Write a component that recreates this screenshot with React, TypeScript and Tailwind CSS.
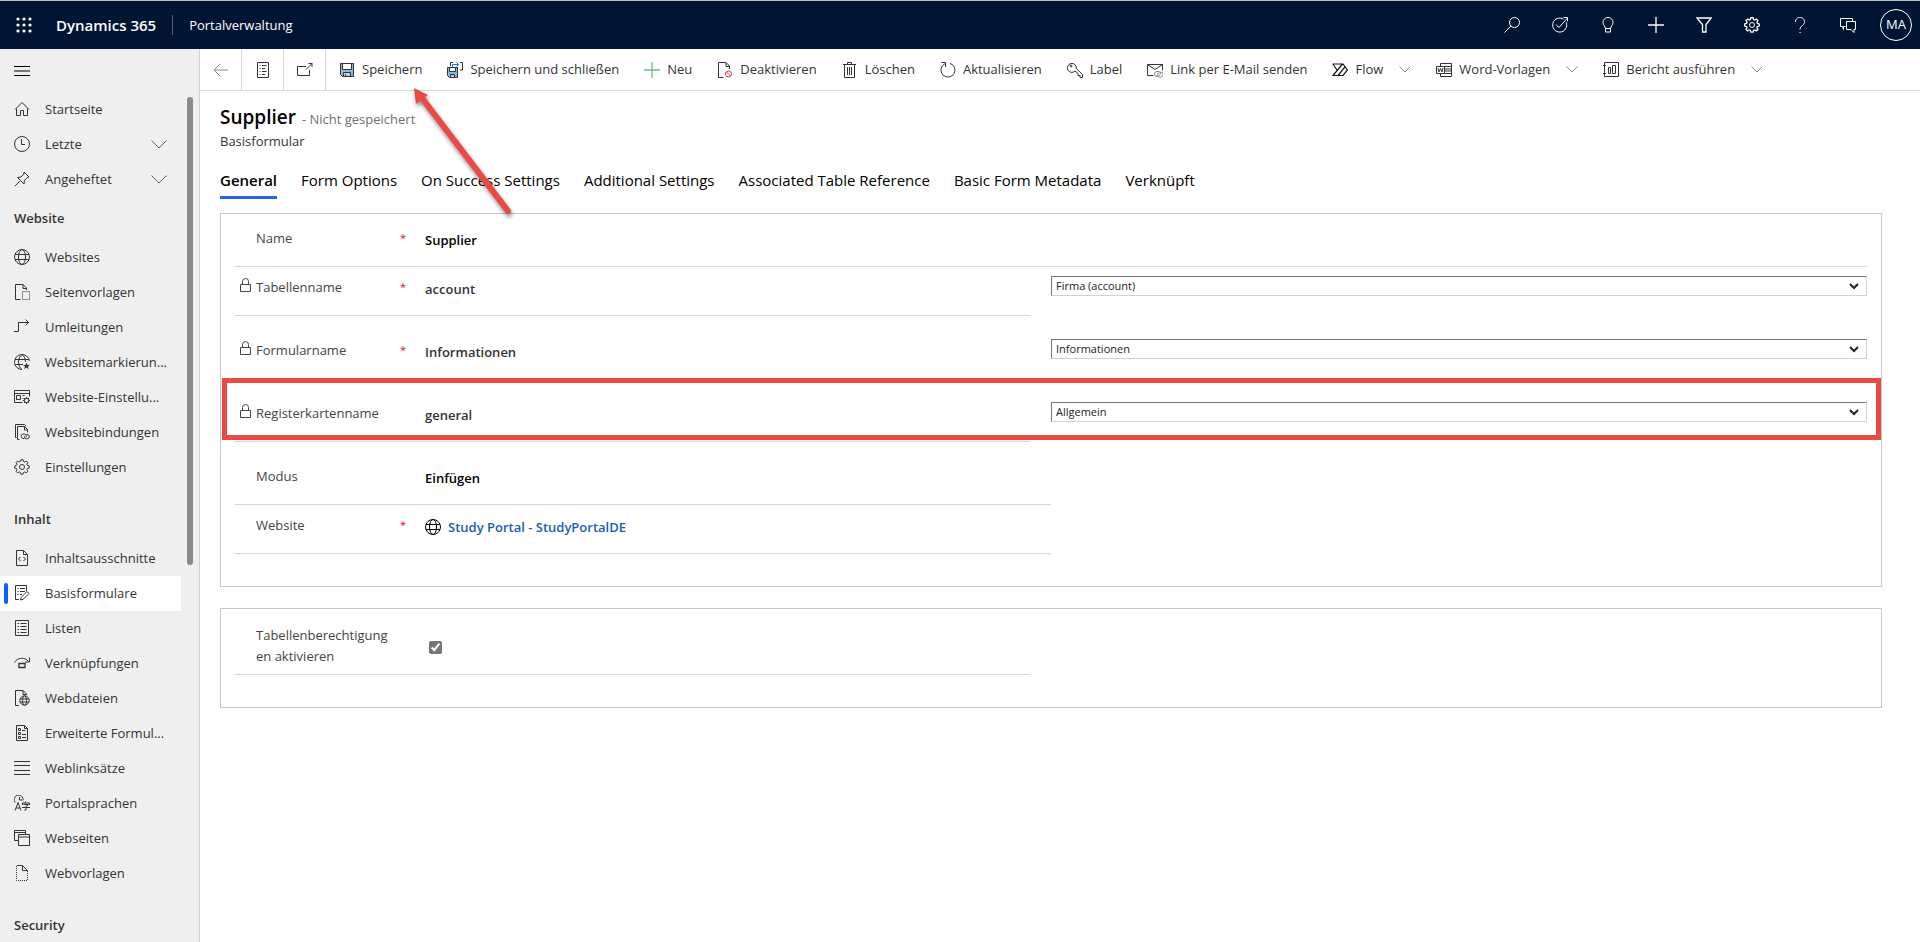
import type { ReactNode } from 'react'

interface IconProps {
  children: ReactNode
  className?: string
}

function Icon({ children, className = '' }: IconProps) {
  return (
    <svg
      width="16"
      height="16"
      viewBox="0 0 16 16"
      fill="none"
      stroke="currentColor"
      aria-hidden="true"
      className={`shrink-0 ${className}`}
    >
      {children}
    </svg>
  )
}

function ChevronIcon({ className = '' }: { className?: string }) {
  return (
    <svg width="16" height="9" viewBox="0 0 16 9" fill="none" stroke="currentColor" aria-hidden="true" className={`shrink-0 ${className}`}>
      <path d="M.5 .5 8 8 15.5 .5" />
    </svg>
  )
}

const GEAR_PATH =
  'M6.9.7h2.2l.4 1.8 1.2.5 1.6-1 1.6 1.6-1 1.6.5 1.2 1.8.5v2.2l-1.8.4-.5 1.2 1 1.6-1.6 1.6-1.6-1-1.2.5-.4 1.8H6.9l-.5-1.8-1.2-.5-1.6 1L2 12.3l1-1.6-.5-1.2-1.8-.4V6.9l1.8-.5.5-1.2-1-1.6L3.6 2l1.6 1 1.2-.5z'

const icons = {
  home: <path d="M1 8.5 8 1.5l7 7M2.5 7.5v7h4v-5h3v5h4v-7" />,
  clock: (
    <>
      <circle cx="8" cy="8" r="7.5" />
      <path d="M7.5 3v5.5H11" />
    </>
  ),
  pin: <path d="m10 1 5 5-1.5.3-3 3-.5 3.700L3.5 6.5l3.500-.5 3-3zM6.500 9.500.8 15.2" />,
  globe: (
    <>
      <circle cx="8" cy="8" r="7.5" />
      <ellipse cx="8" cy="8" rx="3.5" ry="7.5" />
      <path d="M1.2 5.5h13.6M1.2 10.5h13.6" />
    </>
  ),
  pageTemplate: (
    <>
      <path d="M6.5 15.5h-5V.5H9L12.5 4v2M9 .5v4h3.5" />
      <path d="M8.500 7.500v8h7v-8z" strokeDasharray="1 1" />
    </>
  ),
  redirect: <path d="M0 12.5h4.5v-9H15M11.5.5l3 3-3 3" />,
  siteMarker: (
    <>
      <path d="M15.4 7A7.500 7.500 0 1 0 8 15.5M8 .5c-4.600 3-4.600 12 0 15M8 .5c2.500 1.700 3.500 4.500 3.500 7.500M1.2 5.5h13.6M1.2 10.5H9" />
      <path d="m12.5 8.5 1 2.500h2.500l-2 1.600.8 2.600-2.300-1.600-2.300 1.600.8-2.600-2-1.600h2.500z" fill="currentColor" stroke="none" />
    </>
  ),
  siteSetting: (
    <>
      <path d="M8.5 13.5h-8v-12h15v6M.5 4.5h15M2.5 6.500h4v4h-4zM8.500 6.500h2M8.500 9.500h1" />
      <circle cx="12.5" cy="11.5" r="2.2" />
      <path d="M12.5 8v1.500M12.5 13.500V15M9 11.500h1.500M14.500 11.500H16M10 9l1 1M14 13l1 1M15 9l-1 1M11 13l-1 1" />
    </>
  ),
  siteBinding: (
    <>
      <path d="M2.5 13.5h-1V.5h9L12 2M5.5 15.5h-2v-13h7l3 3v3M10.5 2.5v3.500h3" />
      <path d="M10.5 14.5H9a2.300 2.300 0 0 1 0-4.500h1.500a2 2 0 0 1 1.500 3.200M12.500 10.500h.7a2 2 0 0 1 0 4.300H12a2 2 0 0 1-1.200-3" />
    </>
  ),
  gear: (
    <>
      <path d={GEAR_PATH} />
      <circle cx="8" cy="8" r="2.5" />
    </>
  ),
  snippet: (
    <>
      <path d="M2.5.5h7l4 4v11h-11zM9.500.5v4h4" />
      <path d="M6.5 7 4.5 9l2 2M9.5 7l2 2-2 2" />
    </>
  ),
  basicForm: (
    <>
      <path d="M5 14.5H1.500V.5h11V6M3.500 3.500h1M6 3.500h5M3.500 6.500h1M6 6.500h5M3.500 9.500h1M6 9.500h2" />
      <path d="m6.5 15 .7-2.700L13 6.500l2 2-5.800 5.800z" />
    </>
  ),
  list: <path d="M1.5.5h13v15h-13zM3.500 3.500H5M6.500 3.500h6M3.500 6.500H5M6.500 6.500h6M3.500 9.500H5M6.500 9.500h6M3.500 12.500H5M6.500 12.500h6" />,
  shortcut: (
    <>
      <path d="M.5 7.500C3.500 2 11.500 2 14.500 6.500M15.500 2.500v4.500H11" />
      <path d="M5 8.500h6v4H5z" strokeWidth="1.3" />
    </>
  ),
  webFile: (
    <>
      <path d="M5 15.500H1.500V.5H9L12.500 4v1M9 .5v4h3.500" />
      <circle cx="10.5" cy="10.5" r="4.7" />
      <ellipse cx="10.5" cy="10.5" rx="2" ry="4.7" />
      <path d="M6 9h9M6 12h9" />
    </>
  ),
  advancedForm: (
    <>
      <path d="M2.5.5h8l3 3v12h-11zM10.500.5v3h3" />
      <path d="M4.500 3.500h2v2h-2zM4.500 7.500h2v2h-2zM4.500 11.500h2v2h-2zM8 5.500h3.500M8 9.500h4M8 12.500h4" />
    </>
  ),
  linkSet: <path d="M0 1.5h16M0 5.5h16M0 10.5h16M0 14.5h16" />,
  language: (
    <>
      <path d="M1.2 7.500A4.500 4.500 0 1 1 9 5.500M5.500 2v3H8" />
      <path d="m1 15.500 3-8 3 8M2 13h4" />
      <path d="M11.500 6.500V8M8.500 10V8h7v2M9.500 9.500h5L12 11.500V15h-1.500M8 12.500h8" />
    </>
  ),
  webPages: (
    <>
      <path d="M4 10.500H.5v-10h11V4M.5 2.500h11" />
      <path d="M4.500 4.500h11v11h-11zM4.500 7h11" />
    </>
  ),
  webTemplate: (
    <>
      <path d="M2.500 1v14.500h11V6" strokeDasharray="1 1" />
      <path d="M3 .5h5.500l5 5h-5v-5" />
    </>
  ),
}

interface NavEntry {
  label: string
  icon: keyof typeof icons
  active?: boolean
  expandable?: boolean
}

const TOP_ITEMS: NavEntry[] = [
  { label: 'Startseite', icon: 'home' },
  { label: 'Letzte', icon: 'clock', expandable: true },
  { label: 'Angeheftet', icon: 'pin', expandable: true },
]

const WEBSITE_ITEMS: NavEntry[] = [
  { label: 'Websites', icon: 'globe' },
  { label: 'Seitenvorlagen', icon: 'pageTemplate' },
  { label: 'Umleitungen', icon: 'redirect' },
  { label: 'Websitemarkierun...', icon: 'siteMarker' },
  { label: 'Website-Einstellu...', icon: 'siteSetting' },
  { label: 'Websitebindungen', icon: 'siteBinding' },
  { label: 'Einstellungen', icon: 'gear' },
]

const CONTENT_ITEMS: NavEntry[] = [
  { label: 'Inhaltsausschnitte', icon: 'snippet' },
  { label: 'Basisformulare', icon: 'basicForm', active: true },
  { label: 'Listen', icon: 'list' },
  { label: 'Verknüpfungen', icon: 'shortcut' },
  { label: 'Webdateien', icon: 'webFile' },
  { label: 'Erweiterte Formul...', icon: 'advancedForm' },
  { label: 'Weblinksätze', icon: 'linkSet' },
  { label: 'Portalsprachen', icon: 'language' },
  { label: 'Webseiten', icon: 'webPages' },
  { label: 'Webvorlagen', icon: 'webTemplate' },
]

function NavItem({ label, icon, active, expandable }: NavEntry) {
  return (
    <li>
      <a href="#" className={`flex h-[35px] items-center pr-[14px] pl-1 ${active ? 'bg-white' : ''}`}>
        <span className={`h-[21px] w-1 ${active ? 'rounded-xs bg-[#0b62fb]' : ''}`} />
        <span className="ml-1.5 w-[31px] pb-0.5">
          <Icon>{icons[icon]}</Icon>
        </span>
        <span className="flex-1 whitespace-nowrap">{label}</span>
        {expandable && <ChevronIcon className="text-[#666]" />}
      </a>
    </li>
  )
}

function NavGroup({ title, items }: { title: string; items: NavEntry[] }) {
  return (
    <section className="mb-[13px]">
      <h2 className="flex h-[43px] items-center pl-[14px] font-semibold">{title}</h2>
      <ul>
        {items.map((item) => (
          <NavItem key={item.label} {...item} />
        ))}
      </ul>
    </section>
  )
}

function Sidebar() {
  return (
    <aside className="flex w-[200px] shrink-0 flex-col border-r border-[#d2d2d2] bg-[#efefef] text-[13px] text-[#333]">
      <button type="button" aria-label="Navigation umschalten" className="flex h-[43px] shrink-0 items-center pl-[14px] text-black">
        <svg width="16" height="10" viewBox="0 0 16 10" stroke="currentColor" aria-hidden="true">
          <path d="M0 .5h16M0 5h16M0 9.500h16" />
        </svg>
      </button>
      <div className="flex min-h-0 flex-1 gap-1.5 overflow-hidden">
        <nav className="w-[181px]">
          <ul>
            {TOP_ITEMS.map((item) => (
              <NavItem key={item.label} {...item} />
            ))}
          </ul>
          <NavGroup title="Website" items={WEBSITE_ITEMS} />
          <NavGroup title="Inhalt" items={CONTENT_ITEMS} />
          <NavGroup title="Security" items={[]} />
        </nav>
        <div className="mt-[5px] h-[55%] w-1.5 rounded-full bg-[#8a8a8a]" />
      </div>
    </aside>
  )
}

const HEADER_ACTIONS: { label: string; icon: ReactNode }[] = [
  { label: 'Suchen', icon: <><circle cx="10.5" cy="5.5" r="5" /><path d="M7 9 .5 15.500" /></> },
  {
    label: 'Aufgaben',
    icon: <><path d="M11.500 2.200a7 7 0 1 0 2.700 3.300" /><path d="m4 7.500 3 3 8.500-9.500M11.500.5h4v4" /></>,
  },
  {
    label: 'Tipps',
    icon: <path d="M5.500 11.500C5.500 9.500 3 8.500 3 5.400a5 5 0 0 1 10 0c0 3.100-2.500 4.100-2.500 6.100zM5.500 11.500v3.500h5v-3.500" />,
  },
  { label: 'Neu', icon: <path d="M8 0v16M0 8h16" strokeWidth="1.3" /> },
  { label: 'Filter', icon: <path d="M.8 1h14.400L10 7.500V15H6.500V7.500z" strokeWidth="1.3" /> },
  { label: 'Einstellungen', icon: <><path d={GEAR_PATH} strokeWidth="1.3" /><circle cx="8" cy="8" r="2.5" /></> },
  {
    label: 'Hilfe',
    icon: <><path d="M3.500 5a4.500 4.500 0 1 1 7.200 3.400C9 9.600 8 10.200 8 12.500" /><path d="M7.500 15.500h1.200" /></>,
  },
  {
    label: 'Feedback',
    icon: <path d="M5.500 9.500h-2v3l-1-3H.5v-8h12v3M6.500 4.500h9v8h-1.500v3l-3-3H6.500z" />,
  },
]

function TopBar() {
  return (
    <header className="flex h-[49px] shrink-0 items-center border-t border-[#bfbfbf] bg-[#001433] text-white">
      <button type="button" aria-label="App-Startfeld" className="flex h-full w-[47px] items-center justify-center">
        <svg width="16" height="16" viewBox="0 0 16 16" fill="currentColor" aria-hidden="true">
          {[2, 8, 14].map((y) => [2, 8, 14].map((x) => <circle key={`${x}-${y}`} cx={x} cy={y} r="1.6" />))}
        </svg>
      </button>
      <span className="ml-[9px] text-[15px] font-semibold">Dynamics 365</span>
      <span className="ml-4 h-5 w-px bg-[#4b5a72]" />
      <span className="ml-4 pt-0.5 text-[13px]">Portalverwaltung</span>
      <div className="ml-auto flex items-center">
        {HEADER_ACTIONS.map((action) => (
          <button key={action.label} type="button" aria-label={action.label} className="flex h-12 w-12 items-center justify-center">
            <Icon>{action.icon}</Icon>
          </button>
        ))}
        <button type="button" aria-label="Konto" className="mx-2 flex size-8 items-center justify-center rounded-full border border-white text-[13px] font-medium">
          MA
        </button>
      </div>
    </header>
  )
}

const COMMANDS: { label: string; icon: ReactNode; menu?: boolean }[] = [
  {
    label: 'Speichern',
    icon: (
      <>
        <path d="M1.500 1.500h13v13H3.500l-2-2z" fill="#83bbe5" stroke="#333" />
        <path d="M3.500 1.500h9v6h-9z" fill="#fff" stroke="#333" />
        <path d="M4.500 14.500v-4h7v4z" fill="#ccc" stroke="#333" />
        <path d="M6.500 12.500v2" stroke="#333" />
      </>
    ),
  },
  {
    label: 'Speichern und schließen',
    icon: (
      <>
        <path d="M.500 5.500h10v10h-8l-2-2z" fill="#83bbe5" stroke="#333" />
        <path d="M2.500 5.500h6v4h-6z" fill="#fff" stroke="#333" />
        <path d="M3.500 15.500v-3h4v3z" fill="#ccc" stroke="#333" />
        <path d="M3.500 4V.5H6M13 .5h2.500v7.500H13" stroke="#333" />
        <path d="M5.500 4.500v-2h6M9.500.5l2 2-2 2" stroke="#1a73c7" />
      </>
    ),
  },
  { label: 'Neu', icon: <path d="M8 0v16M0 8h16" stroke="#5fbf83" strokeWidth="1.3" /> },
  {
    label: 'Deaktivieren',
    icon: (
      <>
        <path d="M6.500 15.500h-5V.5H9L12.500 4v3M9 .5v4h3.500" />
        <circle cx="11.5" cy="12" r="3" stroke="#dd3b44" />
        <path d="m9.500 10 4 4" stroke="#dd3b44" />
      </>
    ),
  },
  { label: 'Löschen', icon: <path d="M2.500 2.500v13h10v-13M1 2.500h13M5.500 2.500v-2h4v2M5.500 5v8M7.500 5v8M9.500 5v8" /> },
  { label: 'Aktualisieren', icon: <><path d="M4.800 1.800a7 7 0 1 0 5-.5" /><path d="M1.500.5h4V5" /></> },
  {
    label: 'Label',
    icon: (
      <>
        <path d="M8 9.100A4.500 4.500 0 1 1 9.300 6.500L15.500 12.500v3H13v-2h-2v-2z" />
        <circle cx="4" cy="4" r="1" />
      </>
    ),
  },
  {
    label: 'Link per E-Mail senden',
    icon: (
      <>
        <path d="M6.500 13.500h-6v-11h15v6M.5 2.500l7.500 5 7.500-5" />
        <path d="M10 14.500a2.500 2.500 0 0 1 0-5h1.500a2 2 0 0 1 0 4M12.500 10h1a2.500 2.500 0 0 1 0 5H12a2 2 0 0 1 0-4" stroke="#888" />
      </>
    ),
  },
  {
    label: 'Flow',
    icon: <path d="M.8 2H11l4.500 6-4.500 5.500H1L10.500 2M.8 2 5 8M6 13.500 13 4.800" strokeWidth="1.2" stroke="#111" />,
    menu: true,
  },
  {
    label: 'Word-Vorlagen',
    icon: (
      <>
        <path d="M4.500 4V1.500h11v13h-11V12M8.500 4.500h7M8.500 7h7M8.500 9h7M8.500 11.500h7" />
        <path d="M.5 4.500h8v7h-8z" />
        <path d="m2 6 1 4 1.500-3.500L6 10l1-4" />
      </>
    ),
    menu: true,
  },
  {
    label: 'Bericht ausführen',
    icon: <path d="M1.500.5h14v14h-14zM0 3.500h3M0 11.500h3M5.500 5.500h2v6h-2zM9.500 3.500h3v8h-3z" />,
    menu: true,
  },
]

const SQUARE_COMMANDS: { label: string; icon: ReactNode }[] = [
  { label: 'Zurück', icon: <path d="M1 8h14M7 2 1 8l6 6" stroke="#888" /> },
  {
    label: 'Formular',
    icon: (
      <>
        <path d="M2.500.5h11v15h-11z" />
        <path d="M4.500 3.500h1M4.500 6.500h1M4.500 9.500h1M4.500 12.500h1M7 3.500h4.500M7 6.500h3M7 9.500h4.500M7 12.500h3" />
      </>
    ),
  },
  { label: 'In neuem Fenster öffnen', icon: <path d="M9 4.500H.5v9h12V8M9 7.500l6-6M11.500 1.500H15V5" /> },
]

function CommandBar() {
  return (
    <div className="flex h-[42px] shrink-0 border-b border-[#d6d6d6] text-[13px] whitespace-nowrap text-[#333]">
      {SQUARE_COMMANDS.map((cmd) => (
        <button key={cmd.label} type="button" aria-label={cmd.label} className="flex w-[42px] items-center justify-center border-r border-[#d6d6d6]">
          <Icon>{cmd.icon}</Icon>
        </button>
      ))}
      <div className="flex items-center gap-[25px] pl-[13px]">
        {COMMANDS.map((cmd) => (
          <button key={cmd.label} type="button" className="flex items-center">
            <Icon>{cmd.icon}</Icon>
            <span className="ml-[7px]">{cmd.label}</span>
            {cmd.menu && (
              <svg width="12" height="7" viewBox="0 0 12 7" fill="none" stroke="#888" aria-hidden="true" className="ml-4">
                <path d="M.5 .5 6 6 11.500 .5" />
              </svg>
            )}
          </button>
        ))}
      </div>
    </div>
  )
}

const TABS = [
  'General',
  'Form Options',
  'On Success Settings',
  'Additional Settings',
  'Associated Table Reference',
  'Basic Form Metadata',
  'Verknüpft',
]

function Tabs() {
  return (
    <div role="tablist" className="mt-[18px] flex gap-6 text-[15px] text-black">
      {TABS.map((tab, idx) => (
        <button
          key={tab}
          type="button"
          role="tab"
          aria-selected={idx === 0}
          className={`h-[30px] border-b-3 pb-1 whitespace-nowrap ${idx === 0 ? 'border-[#2266e3] font-semibold' : 'border-transparent'}`}
        >
          {tab}
        </button>
      ))}
    </div>
  )
}

interface FieldProps {
  id: string
  label: string
  children: ReactNode
  required?: boolean
  locked?: boolean
  className?: string
}

function Field({ id, label, children, required, locked, className = '' }: FieldProps) {
  return (
    <div className={`flex h-[49px] border-b border-[#d6d6d6] pl-[5px] text-[13px] leading-5 ${className}`}>
      <span className="w-4 pt-[11px] text-[#444]">
        {locked && (
          <svg width="11" height="14" viewBox="0 0 11 14" fill="none" stroke="currentColor" aria-hidden="true">
            <path d="M.5 6.500h10v7H.5zM2.500 6.500V3.500a3 3 0 0 1 6 0v3" />
          </svg>
        )}
      </span>
      <label htmlFor={id} className="w-36 pt-2.5 text-[#444]">
        {label}
      </label>
      <span className="w-6 pt-2.5 text-[11px] text-[#e00b1c]">{required && '*'}</span>
      <div className="flex-1 pt-3 pl-px">{children}</div>
    </div>
  )
}

function TextValue({ id, value, readOnly }: { id: string; value: string; readOnly?: boolean }) {
  return (
    <input
      id={id}
      type="text"
      defaultValue={value}
      readOnly={readOnly}
      className={`block w-full bg-transparent font-semibold outline-none ${readOnly ? 'text-[#333]' : 'text-black'}`}
    />
  )
}

function Picker({ label, value }: { label: string; value: string }) {
  return (
    <div className="relative mt-[9px]">
      <select
        aria-label={label}
        className="block h-5 w-full appearance-none border border-t-[#767676] border-r-[#d5d2ca] border-b-[#d5d2ca] border-l-[#767676] bg-white pl-1 text-[11px] text-[#222]"
      >
        <option>{value}</option>
      </select>
      <svg width="10" height="7" viewBox="0 0 10 7" fill="none" stroke="#222" strokeWidth="2" aria-hidden="true" className="pointer-events-none absolute top-[7px] right-2">
        <path d="m1 1 4 4 4-4" />
      </svg>
    </div>
  )
}

const LOOKUPS = [
  { id: 'table', label: 'Tabellenname', value: 'account', choice: 'Firma (account)', required: true },
  { id: 'form', label: 'Formularname', value: 'Informationen', choice: 'Informationen', required: true },
  { id: 'tab', label: 'Registerkartenname', value: 'general', choice: 'Allgemein', highlighted: true },
]

function GeneralSection() {
  return (
    <section className="mt-[14px] border border-[#c8c8c8] px-[14px] pb-8">
      <div className="pt-1">
        <Field id="name" label="Name" required>
          <TextValue id="name" value="Supplier" />
        </Field>
      </div>
      {LOOKUPS.map((row) => (
        <div key={row.id} className="relative grid h-[63px] grid-cols-2">
          <Field id={row.id} label={row.label} required={row.required} locked className="mr-[21px]">
            <TextValue id={row.id} value={row.value} readOnly />
          </Field>
          <Picker label={row.label} value={row.choice} />
          {row.highlighted && (
            <div className="pointer-events-none absolute -top-[15px] -right-[14px] bottom-4 -left-[13px] border-5 border-[#ea4a43]" />
          )}
        </div>
      ))}
      <div className="grid grid-cols-2">
        <Field id="mode" label="Modus" className="col-start-1">
          <TextValue id="mode" value="Einfügen" />
        </Field>
        <Field id="website" label="Website" required className="col-start-1">
          <a id="website" href="#" className="flex items-center gap-[7px] font-semibold text-[#1a5cb8]">
            <Icon className="text-black">{icons.globe}</Icon>
            Study Portal - StudyPortalDE
          </a>
        </Field>
      </div>
    </section>
  )
}

function PermissionSection() {
  return (
    <section className="mt-[21px] border border-[#c8c8c8] px-[14px] pb-8">
      <div className="grid grid-cols-2">
        <div className="mr-[21px] flex h-[66px] border-b border-[#d6d6d6] pt-4 pl-[21px] text-[13px] leading-[21px] text-[#444]">
          <label htmlFor="permissions" className="w-[137px] wrap-break-word">
            Tabellenberechtigungen aktivieren
          </label>
          <input id="permissions" type="checkbox" defaultChecked className="mt-4 ml-9 size-[13px] accent-[#767676]" />
        </div>
      </div>
    </section>
  )
}

function PointerArrow() {
  return (
    <svg
      width="120"
      height="144"
      viewBox="0 0 120 144"
      aria-hidden="true"
      className="pointer-events-none absolute top-[35px] left-[210px] drop-shadow-[1px_3px_2px_rgba(0,0,0,0.45)]"
    >
      <path d="M12 14 98 127" stroke="#ea4a43" strokeWidth="6" strokeLinecap="round" />
      <path d="M4 4l14 7L6 20z" fill="#ea4a43" />
    </svg>
  )
}

export default function App() {
  return (
    <div className="flex h-screen flex-col overflow-hidden bg-white font-['Open_Sans',sans-serif]">
      <TopBar />
      <div className="flex min-h-0 flex-1">
        <Sidebar />
        <div className="relative flex min-w-0 flex-1 flex-col">
          <CommandBar />
          <main className="min-h-0 flex-1 overflow-hidden pt-3 pr-[38px] pl-5">
            <div className="flex items-baseline gap-1.5">
              <h1 className="text-[19px] leading-7 font-semibold text-black">Supplier</h1>
              <span className="text-[13px] text-[#707070]">- Nicht gespeichert</span>
            </div>
            <p className="text-[13px] leading-5 font-medium text-[#333]">Basisformular</p>
            <Tabs />
            <GeneralSection />
            <PermissionSection />
          </main>
          <PointerArrow />
        </div>
      </div>
    </div>
  )
}
